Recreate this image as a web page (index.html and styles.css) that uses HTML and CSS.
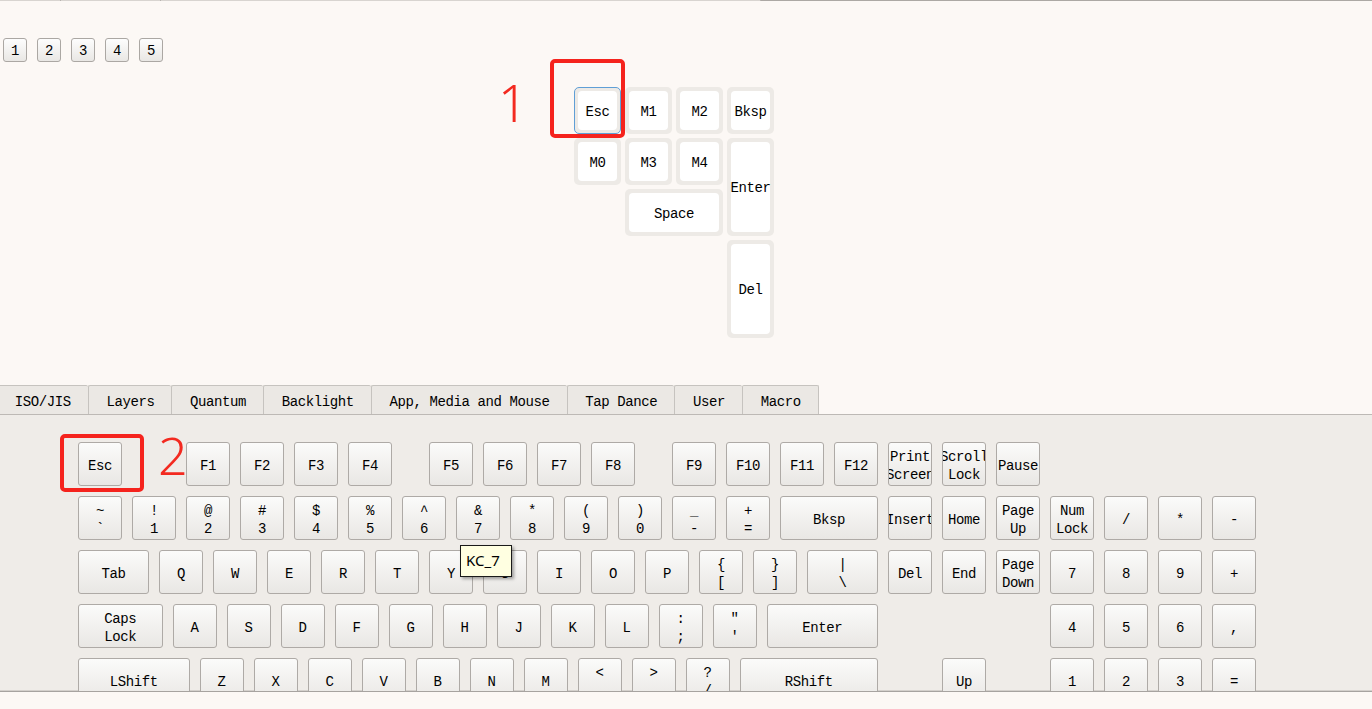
FILE: index.html
```html
<!DOCTYPE html>
<html>
<head>
<meta charset="utf-8">
<link rel="stylesheet" href="styles.css">
</head>
<body>
<div class="top-area">
  <div class="topline"><span class="seg s1"></span><span class="seg s2"></span><span class="seg s3"></span><span class="seg s4"></span></div>
  <div class="layer-bar">
    <button class="lbtn">1</button>
    <button class="lbtn">2</button>
    <button class="lbtn">3</button>
    <button class="lbtn">4</button>
    <button class="lbtn">5</button>
  </div>
  <div class="layout-grid">
    <div class="cell c1 r1 selected"><div class="outer"><div class="inner">Esc</div></div></div>
    <div class="cell c2 r1"><div class="outer"><div class="inner">M1</div></div></div>
    <div class="cell c3 r1"><div class="outer"><div class="inner">M2</div></div></div>
    <div class="cell c4 r1"><div class="outer"><div class="inner">Bksp</div></div></div>
    <div class="cell c1 r2"><div class="outer"><div class="inner">M0</div></div></div>
    <div class="cell c2 r2"><div class="outer"><div class="inner">M3</div></div></div>
    <div class="cell c3 r2"><div class="outer"><div class="inner">M4</div></div></div>
    <div class="cell c4 r2 tall"><div class="outer"><div class="inner">Enter</div></div></div>
    <div class="cell c2 r3 wide"><div class="outer"><div class="inner">Space</div></div></div>
    <div class="cell c4 r4 tall"><div class="outer"><div class="inner">Del</div></div></div>
  </div>
</div>

<div class="tabs">
  <div class="tab first">ISO/JIS</div>
  <div class="tab">Layers</div>
  <div class="tab">Quantum</div>
  <div class="tab">Backlight</div>
  <div class="tab">App, Media and Mouse</div>
  <div class="tab">Tap Dance</div>
  <div class="tab">User</div>
  <div class="tab last">Macro</div>
</div>

<div class="panel">
  <div class="krow">
    <div class="k">Esc</div><div class="sp1"></div>
    <div class="k">F1</div><div class="k">F2</div><div class="k">F3</div><div class="k">F4</div><div class="sp05"></div>
    <div class="k">F5</div><div class="k">F6</div><div class="k">F7</div><div class="k">F8</div><div class="sp05"></div>
    <div class="k">F9</div><div class="k">F10</div><div class="k">F11</div><div class="k">F12</div>
    <div class="k two"><span>Print</span><span>Screen</span></div>
    <div class="k two"><span>Scroll</span><span>Lock</span></div>
    <div class="k">Pause</div>
  </div>
  <div class="krow">
    <div class="k two"><span>~</span><span>`</span></div>
    <div class="k two"><span>!</span><span>1</span></div>
    <div class="k two"><span>@</span><span>2</span></div>
    <div class="k two"><span>#</span><span>3</span></div>
    <div class="k two"><span>$</span><span>4</span></div>
    <div class="k two"><span>%</span><span>5</span></div>
    <div class="k two"><span>^</span><span>6</span></div>
    <div class="k two"><span>&amp;</span><span>7</span></div>
    <div class="k two"><span>*</span><span>8</span></div>
    <div class="k two"><span>(</span><span>9</span></div>
    <div class="k two"><span>)</span><span>0</span></div>
    <div class="k two"><span>_</span><span>-</span></div>
    <div class="k two"><span>+</span><span>=</span></div>
    <div class="k w2">Bksp</div>
    <div class="k">Insert</div>
    <div class="k">Home</div>
    <div class="k two"><span>Page</span><span>Up</span></div>
    <div class="k two"><span>Num</span><span>Lock</span></div>
    <div class="k">/</div><div class="k">*</div><div class="k">-</div>
  </div>
  <div class="krow">
    <div class="k w15">Tab</div>
    <div class="k">Q</div><div class="k">W</div><div class="k">E</div><div class="k">R</div><div class="k">T</div>
    <div class="k">Y</div><div class="k">U</div><div class="k">I</div><div class="k">O</div><div class="k">P</div>
    <div class="k two"><span>{</span><span>[</span></div>
    <div class="k two"><span>}</span><span>]</span></div>
    <div class="k w15 two"><span>|</span><span>\</span></div>
    <div class="k">Del</div>
    <div class="k">End</div>
    <div class="k two"><span>Page</span><span>Down</span></div>
    <div class="k">7</div><div class="k">8</div><div class="k">9</div><div class="k">+</div>
  </div>
  <div class="krow">
    <div class="k w175 two"><span>Caps</span><span>Lock</span></div>
    <div class="k">A</div><div class="k">S</div><div class="k">D</div><div class="k">F</div><div class="k">G</div>
    <div class="k">H</div><div class="k">J</div><div class="k">K</div><div class="k">L</div>
    <div class="k two"><span>:</span><span>;</span></div>
    <div class="k two"><span>"</span><span>'</span></div>
    <div class="k w225">Enter</div>
    <div class="sp3"></div>
    <div class="k">4</div><div class="k">5</div><div class="k">6</div><div class="k">,</div>
  </div>
  <div class="krow">
    <div class="k w225">LShift</div>
    <div class="k">Z</div><div class="k">X</div><div class="k">C</div><div class="k">V</div><div class="k">B</div>
    <div class="k">N</div><div class="k">M</div>
    <div class="k two"><span>&lt;</span><span>,</span></div>
    <div class="k two"><span>&gt;</span><span>.</span></div>
    <div class="k two"><span>?</span><span>/</span></div>
    <div class="k w275">RShift</div>
    <div class="sp1"></div>
    <div class="k">Up</div>
    <div class="sp1"></div>
    <div class="k">1</div><div class="k">2</div><div class="k">3</div><div class="k">=</div>
  </div>
</div>
<div class="footer"></div>

<div class="tooltip">KC_7</div>
<div class="mark mark1"></div>
<div class="mark mark2"></div>
<div class="num num1">1</div>
<div class="num num2">2</div>
</body>
</html>
```
FILE: styles.css
```css
html, body {
  margin: 0;
  padding: 0;
}
body {
  width: 1372px;
  height: 709px;
  overflow: hidden;
  position: relative;
  background: #fcf8f5;
  font-family: "Liberation Mono", "DejaVu Sans Mono", monospace;
  font-size: 14px;
  letter-spacing: -0.4px;
  color: #000;
}

.top-area {
  height: 385px;
  box-sizing: border-box;
}
.topline {
  display: flex;
  height: 1px;
}
.topline .seg { height: 1px; display: block; }
.topline .s1 { width: 60px; background: #d8d4d0; border-right: 1px solid #b7b3af; }
.topline .s2 { width: 99px; background: #d8d4d0; border-right: 1px solid #b7b3af; }
.topline .s3 { width: 599px; background: #d8d4d0; border-right: 1px solid #b7b3af; }
.topline .s4 { flex: 1; background: #aca8a4; }

.layer-bar {
  display: flex;
  gap: 10px;
  margin: 37px 0 0 3px;
}
.lbtn {
  width: 24px;
  height: 24px;
  padding: 2px 0 0;
  border: 1px solid #aba7a3;
  border-radius: 3px;
  background: linear-gradient(#fdfdfd, #e9e7e4);
  font-family: inherit;
  font-size: 14px;
  letter-spacing: -0.4px;
  color: #000;
}

.layout-grid {
  display: grid;
  grid-template-columns: repeat(4, 51px);
  grid-auto-rows: 51px;
  margin: 23px 0 0 572px;
  width: 204px;
}
.cell { padding: 2px; box-sizing: border-box; }
.c1 { grid-column: 1; }
.c2 { grid-column: 2; }
.c3 { grid-column: 3; }
.c4 { grid-column: 4; }
.r1 { grid-row: 1; }
.r2 { grid-row: 2; }
.r3 { grid-row: 3; }
.r4 { grid-row: 4; }
.tall.r2 { grid-row: 2 / span 2; }
.tall.r4 { grid-row: 4 / span 2; }
.wide { grid-column: 2 / span 2; }
.outer {
  height: 100%;
  box-sizing: border-box;
  padding: 4px;
  background: #edeae6;
  border-radius: 5px;
}
.selected .outer {
  border: 1px solid #5f9fd6;
  padding: 3px;
}
.inner {
  height: 100%;
  box-sizing: border-box;
  padding-top: 2px;
  background: #fff;
  border-radius: 4px;
  display: flex;
  align-items: center;
  justify-content: center;
  white-space: nowrap;
}

.tabs {
  display: flex;
  align-items: flex-end;
  height: 30px;
  box-sizing: border-box;
  border-bottom: 1px solid #bdb9b5;
  overflow: hidden;
}
.tab {
  height: 30px;
  box-sizing: border-box;
  display: flex;
  align-items: center;
  padding: 2px 17px 0 17.7px;
  border-top: 1px solid #c6c3bf;
  border-left: 1px solid #c6c3bf;
  border-radius: 2px 2px 0 0;
  background: #ebe8e4;
  white-space: nowrap;
  margin-bottom: -1px;
}
.tab.first { margin-left: -4px; }
.tab.last { border-right: 1px solid #c6c3bf; }

.panel {
  height: 277px;
  box-sizing: border-box;
  background: #efece8;
  padding: 27px 0 0 78px;
  overflow: hidden;
  border-bottom: 1px solid #a7a3a0;
  box-shadow: inset 0 -1px 0 #d4d0cc;
  display: flex;
  flex-direction: column;
  gap: 10px;
}
.krow {
  display: flex;
  gap: 10px;
  flex-shrink: 0;
}
.k {
  width: 44px;
  height: 44px;
  flex-shrink: 0;
  box-sizing: border-box;
  padding-top: 3px;
  border: 1px solid #aeaaa6;
  border-radius: 3px;
  background: linear-gradient(#fbfbfa, #e9e7e4);
  display: flex;
  flex-direction: column;
  align-items: center;
  justify-content: center;
  white-space: nowrap;
  overflow: hidden;
  line-height: 18px;
}
.k.two span { display: block; line-height: 18px; }
.w15 { width: 71px; }
.w175 { width: 84.5px; }
.w2 { width: 98px; }
.w225 { width: 111.5px; }
.w275 { width: 138.5px; }
.sp1 { width: 44px; flex-shrink: 0; }
.sp05 { width: 17px; flex-shrink: 0; }
.sp3 { width: 152px; flex-shrink: 0; }

.footer {
  height: 18px;
  background: #fcf8f5;
}

.tooltip {
  position: absolute;
  left: 460px;
  top: 545px;
  width: 52px;
  height: 32px;
  box-sizing: border-box;
  border: 1px solid #1a1a1a;
  background: #ffffe1;
  box-shadow: 2px 2px 3px rgba(0,0,0,0.35);
  font-family: "Noto Sans", "Open Sans", sans-serif;
  font-size: 15px;
  letter-spacing: 0;
  line-height: 28px;
  padding-left: 5px;
}

.mark {
  position: absolute;
  border: 4px solid #f5231d;
  border-radius: 5px;
  box-sizing: border-box;
}
.mark1 { left: 550px; top: 59px; width: 75px; height: 79px; }
.mark2 { left: 60px; top: 434px; width: 84px; height: 58px; }

.num {
  position: absolute;
  color: #f32a20;
  font-family: "Noto Sans", "Open Sans", sans-serif;
  font-size: 52px;
  line-height: 52px;
  letter-spacing: 0;
  font-weight: 300;
}
.num1 { left: 498px; top: 76px; }
.num2 { left: 158px; top: 429px; }
```
